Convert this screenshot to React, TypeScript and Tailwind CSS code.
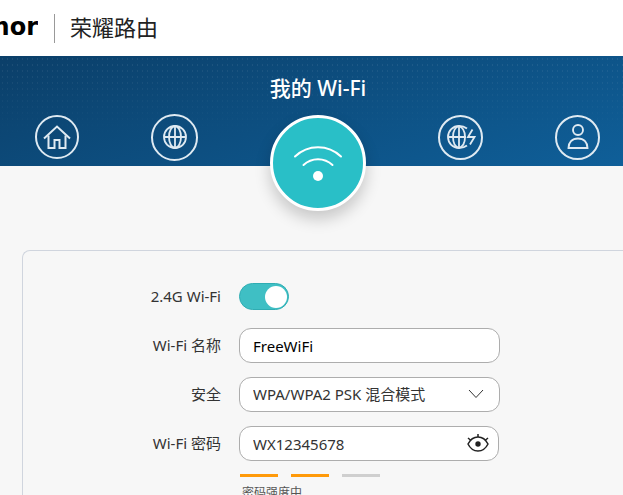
import * as React from "react";

const tabClass = "flex shrink-0 items-center justify-center rounded-full border-2 border-[#dfeaf2] text-[#dfeaf2]";

function HomeIcon() {
  return (
    <svg width="28" height="26" viewBox="0 0 28 26" fill="none" stroke="currentColor" strokeWidth="2">
      <path d="M1 14.5 14 2.5l13 12" />
      <path d="M5.5 11.5V24h6v-8h5v8h6V11.5" />
    </svg>
  );
}

function GlobeIcon() {
  return (
    <svg width="24" height="24" viewBox="0 0 24 24" fill="none" stroke="currentColor" strokeWidth="1.8">
      <circle cx="12" cy="12" r="11" />
      <ellipse cx="12" cy="12" rx="6" ry="11" />
      <path d="M12 1v22M1 12h22" />
    </svg>
  );
}

function GlobeBoltIcon() {
  return (
    <svg width="30" height="24" viewBox="0 0 30 24" fill="none" stroke="currentColor" strokeWidth="1.8">
      <path d="M21 3.5C19 2 16 1 13 1a11 11 0 0 0 0 22c3 0 6-1 8-2.5" />
      <path d="M13 1v22M2 12h18" />
      <path d="M13 1c-8 2.5-8 19.5 0 22M13 1c4 1.5 6 6 6 11s-2 9.5-6 11" />
      <path d="M26.5 4.5 22 12h6.5L24 19.5" />
    </svg>
  );
}

function UserIcon() {
  return (
    <svg width="22" height="26" viewBox="0 0 22 26" fill="none" stroke="currentColor" strokeWidth="1.9">
      <circle cx="11" cy="6" r="5" />
      <path d="M1.5 24c0-5.5 3.5-9.5 9.5-9.5s9.5 4 9.5 9.5z" />
    </svg>
  );
}

function WifiIcon() {
  return (
    <svg width="50" height="36" viewBox="0 0 50 36" fill="none" stroke="white" strokeWidth="2" strokeLinecap="round">
      <path d="M2 11.5a33 33 0 0 1 46 0" />
      <path d="M10.5 20a21 21 0 0 1 29 0" />
      <circle cx="25" cy="31" r="5" fill="white" stroke="none" />
    </svg>
  );
}

function EyeIcon() {
  return (
    <svg width="22" height="18" viewBox="0 0 22 18" fill="none" stroke="#222" strokeWidth="1.5">
      <path d="M1 10c2-4 5.5-7 10-7s8 3 10 7c-2 4-5.5 7-10 7s-8-3-10-7z" />
      <path d="M11 3V0M4 6.5 1 4M18 6.5 21 4" />
      <circle cx="11" cy="10" r="2.7" fill="#222" stroke="none" />
    </svg>
  );
}

function Row({ label, id, children }: { label: string; id: string; children: React.ReactNode }) {
  return (
    <div className="flex h-[35px] items-center gap-[18px]">
      <label htmlFor={id} className="w-[198px] shrink-0 text-right">
        {label}
      </label>
      {children}
    </div>
  );
}

const fieldClass = "h-[35px] w-full rounded-xl border border-[#adadad] bg-white px-[13px] outline-none";

export default function App() {
  return (
    <div className="h-screen overflow-hidden bg-[#f7f7f7] font-['Noto_Sans','Noto_Sans_CJK_SC',sans-serif] text-[15px] text-[#333]">
      <header className="flex h-14 items-center bg-white">
        <div className="flex w-[38px] justify-end overflow-hidden pb-0.5 font-['DejaVu_Sans',sans-serif] text-2xl font-bold text-black">
          nor
        </div>
        <div className="ml-4 h-[29px] w-px bg-[#999]" />
        <div className="ml-[15px] pb-1 font-['Noto_Sans_CJK_SC',sans-serif] text-[22px] leading-7 text-[#222]">荣耀路由</div>
      </header>

      <section className="relative isolate h-[110px] bg-[linear-gradient(160deg,#0b3f69,#0f5f99)] pt-[17px] pl-[13px] before:absolute before:inset-0 before:-z-10 before:bg-[radial-gradient(circle,#ffffff14_1px,transparent_1px)] before:bg-[length:5px_6px] before:[mask-image:linear-gradient(black,transparent_75%)] before:content-['']">
        <h1 className="h-[30px] text-center text-[21px] leading-[30px] font-medium text-white">我的 Wi-Fi</h1>
        <nav className="mt-3 flex h-11 items-center gap-[72px] px-[22px]">
          <button aria-label="首页" className={`${tabClass} size-11`}>
            <HomeIcon />
          </button>
          <button aria-label="上网" className={`${tabClass} size-[47px]`}>
            <GlobeIcon />
          </button>
          <button
            aria-label="我的 Wi-Fi"
            className="flex size-24 shrink-0 items-center justify-center self-start rounded-full border-3 border-white bg-[#29bfc7] shadow-[0_8px_16px_rgba(0,0,0,0.2)]"
          >
            <WifiIcon />
          </button>
          <button aria-label="网络加速" className={`${tabClass} size-[45px]`}>
            <GlobeBoltIcon />
          </button>
          <button aria-label="终端管理" className={`${tabClass} size-[45px]`}>
            <UserIcon />
          </button>
        </nav>
      </section>

      <main className="mt-[84px] ml-[22px] rounded-tl-lg border-t border-l border-[#d0d5de] pt-7">
        <form className="flex flex-col gap-[14px]">
          <Row label="2.4G Wi-Fi" id="enable">
            <input
              id="enable"
              type="checkbox"
              role="switch"
              defaultChecked
              className="flex h-[27px] w-[50px] appearance-none items-center justify-end rounded-full border border-[#2fadb3] bg-[#3fbfc4] pr-px before:size-[22px] before:rounded-full before:bg-white before:content-['']"
            />
          </Row>
          <Row label="Wi-Fi 名称" id="ssid">
            <div className="w-[261px]">
              <input id="ssid" type="text" defaultValue="FreeWiFi" className={`${fieldClass} text-black`} />
            </div>
          </Row>
          <Row label="安全" id="security">
            <div className="relative w-[261px]">
              <select id="security" className={`${fieldClass} appearance-none`}>
                <option>WPA/WPA2 PSK 混合模式</option>
              </select>
              <svg className="pointer-events-none absolute top-3 right-4" width="16" height="10" viewBox="0 0 16 10" fill="none" stroke="#333">
                <path d="m1 1 7 7.5L15 1" />
              </svg>
            </div>
          </Row>
          <Row label="Wi-Fi 密码" id="password">
            <div className="relative w-[260px]">
              <input id="password" type="text" defaultValue="WX12345678" className={fieldClass} />
              <button type="button" aria-label="显示密码" className="absolute top-2 right-[10px]">
                <EyeIcon />
              </button>
            </div>
          </Row>
        </form>
        <div className="mt-[13px] ml-[217px]">
          <div className="flex gap-[13px]">
            <span className="h-[3px] w-[38px] bg-[#ff9a0a]" />
            <span className="h-[3px] w-[38px] bg-[#ff9a0a]" />
            <span className="h-[3px] w-[38px] bg-[#cfcfcf]" />
          </div>
          <p className="mt-2 ml-0.5 text-xs text-[#555]">密码强度中</p>
        </div>
      </main>
    </div>
  );
}
